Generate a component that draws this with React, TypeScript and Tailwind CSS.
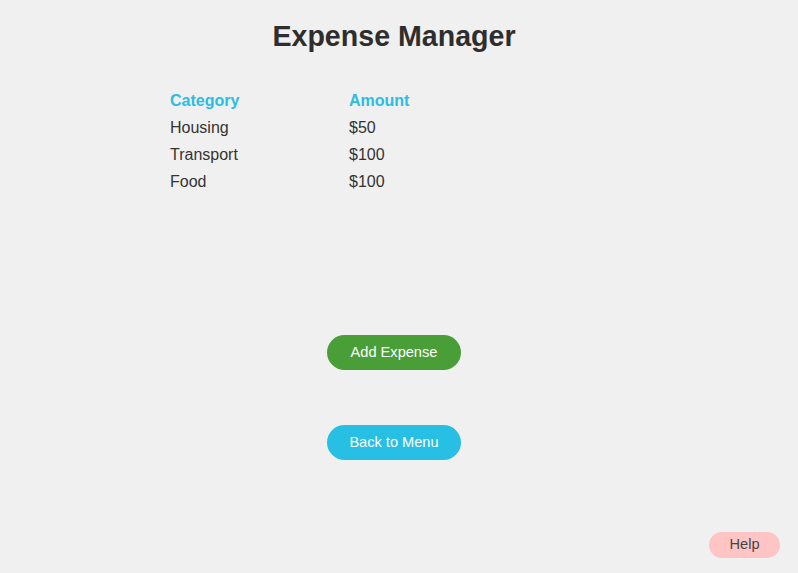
import React from "react"

const expenses = [
  { category: "Housing", amount: "$50" },
  { category: "Transport", amount: "$100" },
  { category: "Food", amount: "$100" },
]

export default function App() {
  return (
    <div
      className="relative flex h-[573px] w-full flex-col bg-[#f0f0f0] pr-[10px] text-[#333333]"
      style={{ fontFamily: '"Liberation Sans", Arial, sans-serif' }}
    >
      <h1 className="mt-[20px] text-center text-[28.6px] font-bold leading-[33px] text-[#2e2e2e]">
        Expense Manager
      </h1>

      <div className="mt-[34px] pl-[170px] text-[16px]">
        <div className="flex h-[27px] items-center font-bold text-[#2bbde3]">
          <div className="w-[179px]">Category</div>
          <div>Amount</div>
        </div>
        {expenses.map((item) => (
          <div className="flex h-[27px] items-center" key={item.category}>
            <div className="w-[179px]">{item.category}</div>
            <div>{item.amount}</div>
          </div>
        ))}
      </div>

      <div className="mt-[140px] flex justify-center">
        <button className="h-[35px] w-[134px] rounded-full bg-[#4a9e37] text-[14.6px] text-white">
          Add Expense
        </button>
      </div>
      <div className="mt-[55px] flex justify-center">
        <button className="h-[35px] w-[134px] rounded-full bg-[#27bfe4] text-[14.6px] text-white">
          Back to Menu
        </button>
      </div>

      <button className="absolute bottom-[15px] right-[18px] h-[26px] w-[71px] rounded-full bg-[#ffc4c4] text-[14.6px] text-[#444444]">
        Help
      </button>
    </div>
  )
}
